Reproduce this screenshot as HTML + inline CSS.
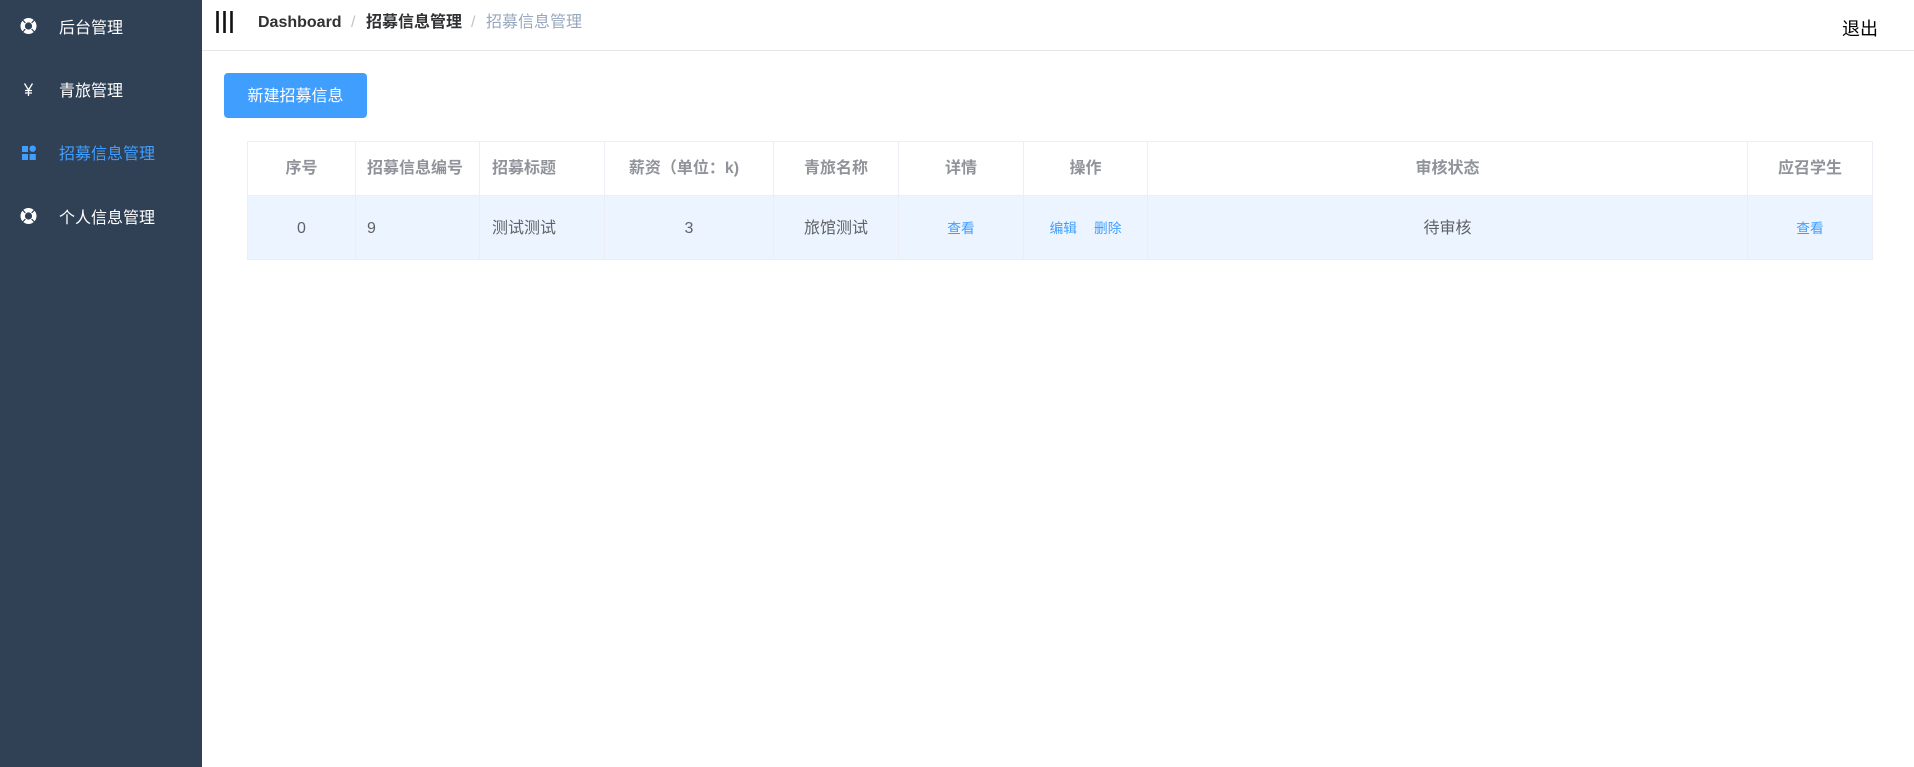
<!DOCTYPE html>
<html lang="zh-CN">
<head>
<meta charset="utf-8">
<title>招募信息管理</title>
<style>
*{box-sizing:border-box}
html,body{margin:0;padding:0;width:1914px;height:767px;overflow:hidden;background:#fff;font-family:"Liberation Sans","Noto Sans CJK SC",sans-serif;}
.side{position:absolute;left:0;top:0;width:202px;height:767px;background:#304156}
.m{position:absolute;left:59px;font-size:16px;line-height:24px;color:#fff;white-space:nowrap}
.abs{position:absolute;white-space:nowrap}
.top{position:absolute;left:202px;top:0;width:1712px;height:51px;border-bottom:1px solid #e6e6e6;background:#fff}
.btn{position:absolute;left:224px;top:73px;width:143px;height:45px;background:#409eff;border-radius:4px;color:#fff;font-size:16px;line-height:47px;text-align:center}
table{position:absolute;left:247px;top:141px;border-collapse:separate;border-spacing:0;table-layout:fixed;width:1626px;border-top:1px solid #ebeef5;border-left:1px solid #ebeef5;font-size:16px;line-height:24px}
td,th{border-right:1px solid #ebeef5;border-bottom:1px solid #ebeef5;padding:0;text-align:center;overflow:hidden;white-space:nowrap}
th{height:54px;font-weight:700;color:#909399}
td{height:64px;color:#606266;background:#ecf5ff;padding-top:2px}
.l{text-align:left;padding-left:11px}
.l2{text-align:left;padding-left:12px}
.pay{padding-right:10px}
.a{color:#409eff;font-size:13.7px}
.a+.a{margin-left:17px}
</style>
</head>
<body>
<div class="side">
  <svg class="abs" style="left:0;top:0" width="60" height="240" viewBox="0 0 60 240">
    <circle cx="28.5" cy="26" r="5.8" fill="none" stroke="#fff" stroke-width="4.4"/>
    <path d="M22.6 20.1l2.8 2.8M34.4 20.1l-2.8 2.8M22.6 31.9l2.8-2.8M34.4 31.9l-2.8-2.8" stroke="#304156" stroke-width="1.2"/>
    <path d="M24.5 83.5l4 6.5 4-6.5M28.5 90v6M25 90.5h7M25 93h7" fill="none" stroke="#fff" stroke-width="1.3"/>
    <rect x="22" y="146" width="6" height="6" fill="#409eff"/>
    <circle cx="32.7" cy="148.7" r="3.2" fill="#409eff"/>
    <rect x="22" y="154" width="6" height="6" fill="#409eff"/>
    <rect x="29.6" y="154" width="6.2" height="6" fill="#409eff"/>
    <circle cx="28.5" cy="216" r="5.8" fill="none" stroke="#fff" stroke-width="4.4"/>
    <path d="M22.6 210.1l2.8 2.8M34.4 210.1l-2.8 2.8M22.6 221.9l2.8-2.8M34.4 221.9l-2.8-2.8" stroke="#304156" stroke-width="1.2"/>
  </svg>
  <div class="m" style="top:17px">后台管理</div>
  <div class="m" style="top:80px">青旅管理</div>
  <div class="m" style="top:143px;color:#409eff">招募信息管理</div>
  <div class="m" style="top:207px">个人信息管理</div>
</div>
<div class="top"></div>
<svg class="abs" style="left:210px;top:5px" width="30" height="34" viewBox="0 0 30 34">
  <path d="M7.5 6v22M14.5 6v22M21.5 6v22" stroke="#111" stroke-width="2.6"/>
</svg>
<div class="abs" style="left:258px;top:11px;font-size:16px;line-height:24px;font-weight:700;color:#303133">Dashboard</div>
<div class="abs" style="left:351px;top:11px;font-size:16px;line-height:24px;color:#c0c4cc">/</div>
<div class="abs" style="left:366px;top:11px;font-size:16px;line-height:24px;font-weight:700;color:#303133">招募信息管理</div>
<div class="abs" style="left:471px;top:11px;font-size:16px;line-height:24px;color:#c0c4cc">/</div>
<div class="abs" style="left:486px;top:11px;font-size:16px;line-height:24px;color:#97a8be">招募信息管理</div>
<div class="abs" style="left:1842px;top:16px;font-size:18px;line-height:26px;color:#000">退出</div>
<div class="btn">新建招募信息</div>
<table>
  <colgroup>
    <col style="width:108px"><col style="width:124px"><col style="width:125px"><col style="width:169px"><col style="width:125px"><col style="width:125px"><col style="width:124px"><col style="width:600px"><col style="width:125px">
  </colgroup>
  <tr>
    <th>序号</th><th class="l">招募信息编号</th><th class="l2">招募标题</th><th class="pay">薪资（单位：k)</th><th>青旅名称</th><th>详情</th><th>操作</th><th>审核状态</th><th>应召学生</th>
  </tr>
  <tr>
    <td>0</td><td class="l">9</td><td class="l2">测试测试</td><td>3</td><td>旅馆测试</td><td><span class="a">查看</span></td><td><span class="a">编辑</span><span class="a">删除</span></td><td>待审核</td><td><span class="a">查看</span></td>
  </tr>
</table>
</body>
</html>
